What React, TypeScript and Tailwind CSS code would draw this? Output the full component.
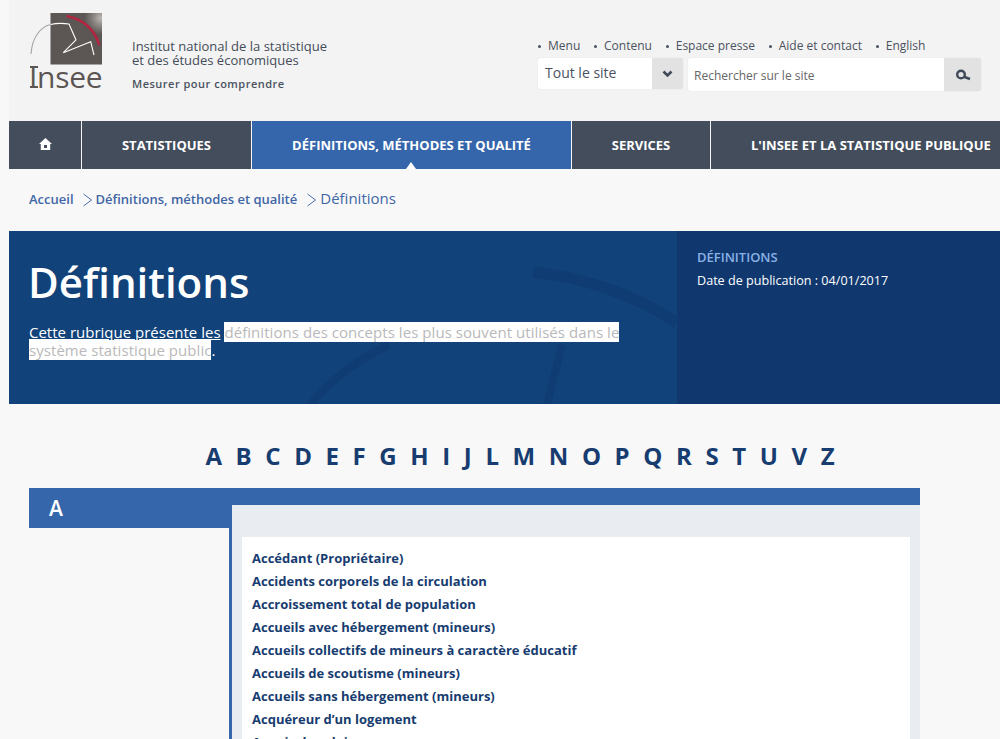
import React from "react";

const letters = "A B C D E F G H I J L M N O P Q R S T U V Z".split(" ");
const items = [
  "Accédant (Propriétaire)",
  "Accidents corporels de la circulation",
  "Accroissement total de population",
  "Accueils avec hébergement (mineurs)",
  "Accueils collectifs de mineurs à caractère éducatif",
  "Accueils de scoutisme (mineurs)",
  "Accueils sans hébergement (mineurs)",
  "Acquéreur d’un logement",
  "Acquis de salaires",
];
const topLinks = ["Menu", "Contenu", "Espace presse", "Aide et contact", "English"];

function Chevron({ className }: { className: string }) {
  return (
    <svg className={className} width="11" height="14" viewBox="0 0 11 14">
      <path d="M1.5 1 L9.5 7 L1.5 13" fill="none" stroke="#4a70ac" strokeWidth="1" />
    </svg>
  );
}

function Logo() {
  return (
    <div className="mt-[13px] ml-[20px] flex w-[74px] shrink-0 flex-col">
      <svg width="74" height="52" viewBox="0 0 74 52" className="block">
        <defs>
          <radialGradient id="g" cx="0.98" cy="0.1" r="0.32">
            <stop offset="0" stopColor="#bdb9b6" />
            <stop offset="0.5" stopColor="#878280" />
            <stop offset="1" stopColor="#5c5654" />
          </radialGradient>
        </defs>
        <rect x="21.5" y="0" width="51.5" height="51.5" fill="url(#g)" />
        <path d="M2 41 C3 25 11 14 21.5 11.5" fill="none" stroke="#a6a3a2" strokeWidth="1.1" />
        <path d="M21.5 11.5 C26 10.5 33 10 40 11 L47 27 L34.3 39.7 L61.7 28.7 L65 42" fill="none" stroke="#ffffff" strokeWidth="1.1" />
        <path d="M37.7 3 C52 6 65 15 70.3 32" fill="none" stroke="#b3243f" strokeWidth="2.6" />
      </svg>
      <div className="relative font-['Open_Sans',sans-serif] text-[30px] leading-[23px] tracking-[-0.3px] text-[#5b5654]">
        Insee
        <span className="absolute top-[1px] left-[1px] h-[2px] w-[8px] bg-[#5b5654]" />
        <span className="absolute top-[21px] left-[1px] h-[2px] w-[8px] bg-[#5b5654]" />
      </div>
    </div>
  );
}

function Header() {
  return (
    <header className="flex h-[121px] bg-[#f3f3f3]">
      <Logo />
      <div className="mt-[39px] ml-[29px] w-[406px] shrink-0 text-[#4a5260]">
        <div className="text-[13px] leading-[14px] text-[#444c58]">
          Institut national de la statistique
          <br />
          et des études économiques
        </div>
        <div className="mt-[9px] text-[11px] leading-[15px] font-semibold tracking-[0.5px]">Mesurer pour comprendre</div>
      </div>
      <div className="mt-[37px] flex flex-col">
        <ul className="flex h-[18px] items-center text-[12px] text-[#4a5260]">
          {topLinks.map((l) => (
            <li key={l} className="mr-[13.8px] flex items-center">
              <span className="mr-[7px] h-[3px] w-[3px] rounded-full bg-[#4a5260]" />
              {l}
            </li>
          ))}
        </ul>
        <div className="mt-[3px] flex items-start">
          <div className="flex h-[31px] w-[145px] rounded-[2px] bg-white shadow-[0_0_1px_#ccc]">
            <div className="flex-1 pl-[7px] text-[14px] leading-[30px] text-[#4a5260]">Tout le site</div>
            <div className="flex w-[31px] items-center justify-center rounded-r-[2px] bg-[#e2e2e2]">
              <svg width="11" height="8" viewBox="0 0 11 8"><path d="M1.5 1.5 L5.5 5.5 L9.5 1.5" fill="none" stroke="#3f4958" strokeWidth="2.6" /></svg>
            </div>
          </div>
          <div className="ml-[5px] flex h-[33px] w-[293px] rounded-[2px] bg-white shadow-[0_0_1px_#ccc]">
            <div className="flex-1 pt-[2px] pl-[6px] text-[12px] leading-[31px] text-[#666]">Rechercher sur le site</div>
            <div className="flex w-[37px] items-center justify-center rounded-r-[2px] bg-[#e2e2e2]">
              <svg width="16" height="12" viewBox="0 0 16 12"><circle cx="6" cy="5.5" r="3.8" fill="none" stroke="#3f4958" strokeWidth="2.4" /><path d="M9.5 8 L15 10" stroke="#3f4958" strokeWidth="2.4" /></svg>
            </div>
          </div>
        </div>
      </div>
    </header>
  );
}

function Nav() {
  const cell = "flex shrink-0 items-center justify-center border-r border-[#f7f7f7] pt-[1px] text-[13px] font-bold text-white";
  return (
    <nav className="flex h-[48px] bg-[#434d5c] font-bold">
      <div className={`${cell} w-[73px] !pt-0 pb-[3px]`}>
        <svg width="15" height="14" viewBox="0 0 15 14">
          <path d="M7.5 1 L1 7 H2.8 V13 H12.2 V7 H14 Z M6 8 H9 V11 H6 Z" fill="#fff" fillRule="evenodd" />
        </svg>
      </div>
      <div className={`${cell} w-[170px]`}>STATISTIQUES</div>
      <div className={`${cell} relative w-[320px] bg-[#3566ab]`}>
        DÉFINITIONS, MÉTHODES ET QUALITÉ
        <span className="absolute bottom-0 left-[154px] h-0 w-0 border-x-[5px] border-b-[7px] border-x-transparent border-b-white" />
      </div>
      <div className={`${cell} w-[139px]`}>SERVICES</div>
      <div className="flex-1 pl-[40px] text-[13px] leading-[49px] whitespace-nowrap text-white">L'INSEE ET LA STATISTIQUE PUBLIQUE</div>
    </nav>
  );
}

function Hero() {
  return (
    <section className="flex h-[173px] bg-[#114279] text-white">
      <div className="relative w-[668px] shrink-0 overflow-hidden pl-[20px]">
        <svg className="absolute top-0 left-0" width="668" height="173" viewBox="0 0 668 173">
          <g fill="none" stroke="#103c74">
            <path d="M524 41 C580 47 630 66 668 92" strokeWidth="11" />
            <path d="M298 178 C320 150 345 130 380 114" strokeWidth="8" />
            <path d="M553 114 L537 178" strokeWidth="8" />
          </g>
        </svg>
        <h1 className="relative mt-[25px] -ml-[1px] text-[42px] leading-[52px] font-semibold">Définitions</h1>
        <p className="relative mt-[15px] w-[600px] text-[15px] leading-[18px]">
          <span className="underline">Cette rubrique présente les</span>{" "}
          <span className="bg-white tracking-[0.055px] text-[#b9b9b9] [box-decoration-break:clone]">définitions des concepts les plus souvent utilisés dans le système statistique public</span>.
        </p>
      </div>
      <div className="flex-1 bg-[#10386f] pt-[17px] pl-[20px]">
        <div className="text-[13px] leading-[18px] font-semibold text-[#8ab1e6]">DÉFINITIONS</div>
        <div className="mt-[6px] text-[12.6px] leading-[18px]">Date de publication : 04/01/2017</div>
      </div>
    </section>
  );
}

function Listing() {
  return (
    <section className="ml-[20px] flex w-[891px] items-start border-t-[17px] border-[#3566ab]">
      <div className="h-[23px] w-[200px] shrink-0 bg-[#3566ab] pl-[20px] text-[21px] leading-[6px] font-semibold text-white">A</div>
      <div className="flex-1 border-l-[3px] border-[#3566ab] bg-[#e9ecf1] px-[10px] pt-[32px]">
        <ul className="bg-white px-[10px] pt-[10px] pb-[20px]">
          {items.map((t) => (
            <li key={t} className="h-[23px] text-[13px] leading-[23px] font-bold text-[#173c70]">{t}</li>
          ))}
        </ul>
      </div>
    </section>
  );
}

export default function App() {
  return (
    <div className="h-[739px] overflow-hidden bg-[#f8f8f8] pl-[9px] font-['Open_Sans',sans-serif]">
      <Header />
      <Nav />
      <div className="flex h-[62px] items-center pb-[1px] pl-[20px] text-[13px] font-semibold text-[#3f66a5]">
        <span>Accueil</span>
        <Chevron className="mr-[3px] ml-[8px]" />
        <span>Définitions, méthodes et qualité</span>
        <Chevron className="mr-[3px] ml-[9px]" />
        <span className="pb-[2px] text-[15px] font-normal">Définitions</span>
      </div>
      <Hero />
      <div className="flex h-[84px] items-center justify-center gap-[13.6px] pt-[20px] pl-[31px] text-[24px] font-bold text-[#173c70]">
        {letters.map((l) => <span key={l}>{l}</span>)}
      </div>
      <Listing />
    </div>
  );
}
